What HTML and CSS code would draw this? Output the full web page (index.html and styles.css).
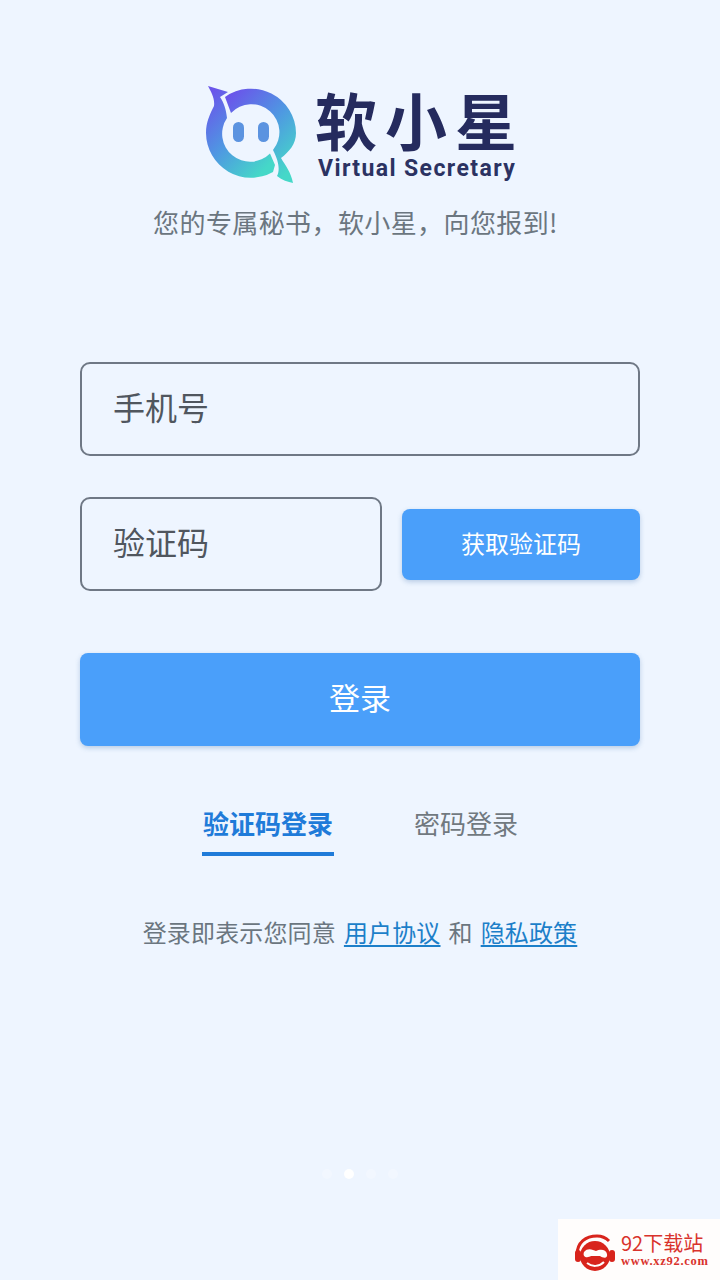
FILE: index.html
```html
<!DOCTYPE html>
<html>
<head>
  <meta charset="utf-8">
  <link rel="stylesheet" href="styles.css">
</head>
<body>
  <div class="page">
    <div class="logo">
      <svg class="logo-mark" width="100" height="110" viewBox="0 0 100 110">
        <defs>
          <linearGradient id="ring" x1="0.1" y1="0.05" x2="0.8" y2="0.95">
            <stop offset="0" stop-color="#6a55ea"/>
            <stop offset="0.5" stop-color="#4f97e2"/>
            <stop offset="1" stop-color="#45d8c8"/>
          </linearGradient>
        </defs>
        <path fill="url(#ring)" d="M7 6 L27 12 L19 17 C23 23 25 29 26 38 A28 28 0 0 0 69 73.5 L74 85 L72 92 A45 45 0 0 1 5 53 C5 42 9 34 13 26 C14 18 10 12 7 6 Z"/>
        <path fill="url(#ring)" d="M24 17 A45 45 0 0 1 95 53 C95 64 88 72 80 78 C84 85 90 92 92 103 C87 102 81 100 76 96 C79 90 78 82 72 70 A28 28 0 0 0 30 33 Z"/>
        <rect class="eye" x="32" y="42" width="11" height="20" rx="5.5"/>
        <rect class="eye" x="57" y="42" width="11" height="20" rx="5.5"/>
      </svg>
      <div class="logo-text">
        <div class="logo-title">软小星</div>
        <div class="logo-sub">Virtual Secretary</div>
      </div>
    </div>
    <p class="tagline">您的专属秘书，软小星，向您报到!</p>

    <div class="form">
      <div class="field">手机号</div>
      <div class="code-row">
        <div class="field field-code">验证码</div>
        <button class="code-button">获取验证码</button>
      </div>
      <button class="login-button">登录</button>
    </div>

    <div class="tabs">
      <a class="tab tab-active">验证码登录</a>
      <a class="tab">密码登录</a>
    </div>

    <p class="agreement">登录即表示您同意<a>用户协议</a>和<a>隐私政策</a></p>

    <div class="dots">
      <span class="dot"></span>
      <span class="dot dot-active"></span>
      <span class="dot"></span>
      <span class="dot"></span>
    </div>
  </div>

  <div class="watermark">
    <svg width="44" height="40" viewBox="0 0 44 40">
      <path class="wm-band" d="M4 22 C4 9 13 3 24 3 C29 3 33 5 36 8"/>
      <circle class="wm-face" cx="22" cy="23" r="15"/>
      <rect class="wm-face" x="2" y="17" width="6" height="12" rx="3"/>
      <rect class="wm-face" x="36" y="17" width="6" height="12" rx="3"/>
      <path class="wm-pad" d="M11 19 C15 14 20 17 23 18 C27 16 33 16 34 21 C35 26 30 25 27 23 L18 23 C15 25 9 25 11 19 Z"/>
      <path class="wm-smile" d="M14 30 C19 34 26 34 31 29"/>
    </svg>
    <div class="wm-text">
      <div class="wm-name">92下载站</div>
      <div class="wm-url">www.xz92.com</div>
    </div>
  </div>
</body>
</html>
```

FILE: styles.css
```css
* {
  margin: 0;
  padding: 0;
  box-sizing: border-box;
  font-family: "Noto Sans CJK SC", "Noto Sans", sans-serif;
}

body {
  background: #eef5ff;
  height: 1280px;
  overflow: hidden;
  position: relative;
}

.page {
  display: flex;
  flex-direction: column;
  align-items: center;
  padding: 80px 80px 0;
}

.logo {
  display: flex;
  height: 110px;
  padding-left: 6px;
}

.logo-mark {
  margin-right: 14px;
}

.eye {
  fill: #5b93e0;
}

.logo-text {
  padding-top: 8px;
}

.logo-title {
  font-size: 62px;
  line-height: 62px;
  font-weight: 700;
  letter-spacing: 8px;
  color: #252b5e;
}

.logo-sub {
  margin: 6px 0 0 3px;
  font-family: Roboto, sans-serif;
  font-size: 23px;
  line-height: 26px;
  font-weight: 700;
  letter-spacing: 1.4px;
  color: #2b3262;
}

.tagline {
  margin-top: 14px;
  padding-right: 9px;
  font-size: 26px;
  line-height: 36px;
  letter-spacing: 0.4px;
  color: #6b7680;
}

.form {
  width: 100%;
  margin-top: 122px;
  display: flex;
  flex-direction: column;
}

.field {
  height: 94px;
  padding: 0 0 6px 31px;
  display: flex;
  align-items: center;
  border: 2px solid #6f7885;
  border-radius: 10px;
  font-size: 32px;
  color: #50565e;
}

.code-row {
  margin-top: 41px;
  display: flex;
  align-items: center;
  gap: 20px;
}

.field-code {
  width: 302px;
}

.code-button {
  flex: 1;
  height: 71px;
  padding-bottom: 4px;
  border: none;
  border-radius: 8px;
  background: #4a9ffa;
  color: white;
  font-size: 24px;
  box-shadow: 0 2px 5px rgba(60, 110, 170, 0.3);
}

.login-button {
  margin-top: 62px;
  height: 93px;
  padding-bottom: 7px;
  border: none;
  border-radius: 8px;
  background: #4a9ffa;
  color: white;
  font-size: 31px;
  box-shadow: 0 2px 5px rgba(60, 110, 170, 0.3);
}

.tabs {
  margin-top: 59px;
  display: flex;
  gap: 80px;
}

.tab {
  padding-bottom: 11px;
  border-bottom: 4px solid transparent;
  font-size: 26px;
  line-height: 36px;
  color: #71797f;
}

.tab-active {
  width: 132px;
  text-align: center;
  font-weight: 700;
  color: #1f7bd9;
  border-bottom-color: #1f7bd9;
}

.agreement {
  margin-top: 58px;
  font-size: 24px;
  line-height: 36px;
  letter-spacing: 0.15px;
  color: #6b7680;
}

.agreement a {
  margin: 0 8px;
  color: #1c7fc9;
  text-decoration: underline;
  text-underline-offset: 3px;
}

.agreement a:last-child {
  margin-right: 0;
}

.dots {
  margin-top: 219px;
  display: flex;
  align-items: center;
  gap: 12px;
  height: 10px;
}

.dot {
  width: 10px;
  height: 10px;
  border-radius: 50%;
  background: rgba(255, 255, 255, 0.25);
}

.dot-active {
  background: rgba(255, 255, 255, 0.95);
}

.watermark {
  position: absolute;
  right: 0;
  bottom: 0;
  width: 162px;
  height: 61px;
  padding: 14px 0 0 15px;
  display: flex;
  gap: 4px;
  background: #fffdfc;
}

.wm-band {
  fill: none;
  stroke: #d8241c;
  stroke-width: 3;
}

.wm-face {
  fill: #d8241c;
}

.wm-pad {
  fill: #fffdfc;
}

.wm-smile {
  fill: none;
  stroke: #fffdfc;
  stroke-width: 2;
}

.wm-text {
  color: #d9332c;
}

.wm-name {
  font-size: 20px;
  line-height: 20px;
}

.wm-url {
  margin-top: 2px;
  font-family: "Liberation Serif", serif;
  font-size: 12.5px;
  line-height: 12px;
  font-weight: 700;
  letter-spacing: 0.7px;
}
```
